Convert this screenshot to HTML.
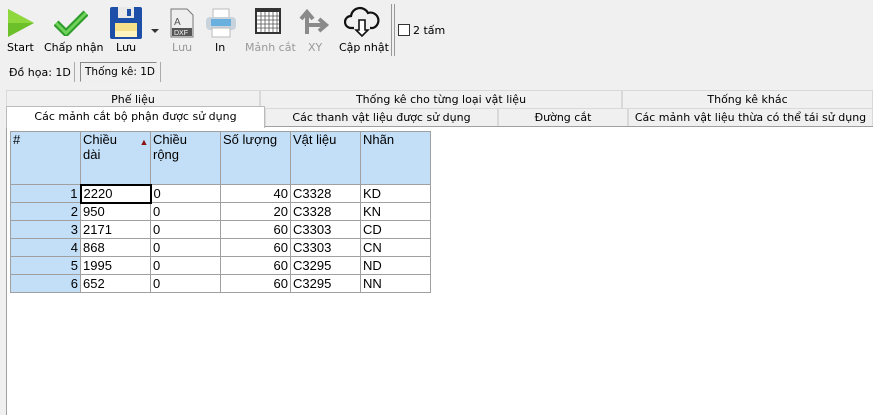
<!DOCTYPE html>
<html><head><meta charset="utf-8"><style>
*{margin:0;padding:0;box-sizing:border-box}
body{width:873px;height:415px;background:#f0f0f0;font-family:"DejaVu Sans","Liberation Sans",sans-serif;font-size:11px;color:#000;position:relative;overflow:hidden}
.a{position:absolute;white-space:nowrap}
.lbl{position:absolute;top:41px;font-size:11px;white-space:nowrap}
.tab{position:absolute;height:18px;border:1px solid #d9d9d9;border-bottom:none;background:#f0f0f0;text-align:center;line-height:18px;font-size:11px;white-space:nowrap;overflow:hidden}
table{position:absolute;left:10px;top:131px;border-collapse:collapse;font-family:"Liberation Sans",Arial,sans-serif;font-size:13px}
td{border:1px solid #a0a0a0;height:18px;padding:0 2px;line-height:16px;width:70px}
th{background:#c3dff8;border:1px solid #a0a0a0;font-weight:normal;text-align:left;vertical-align:top;height:53px;padding:0 2px;line-height:15px}
td.n{background:#c3dff8;text-align:right}
td.r{text-align:right}
</style></head><body>
<svg class="a" style="left:6px;top:8px" width="30" height="30"><polygon points="2,1 28,15 2,29" fill="#6cc02a"/><polygon points="2,1 28,15 2,15" fill="#8ed83e"/></svg>
<div class="lbl" style="left:7px">Start</div>
<svg class="a" style="left:54px;top:10px" width="34" height="26"><path d="M2 13 L12 23 L32 3" stroke="#2e9b2a" stroke-width="7" fill="none"/><path d="M2 13 L12 23 L32 3" stroke="#6fd25a" stroke-width="3" fill="none"/></svg>
<div class="lbl" style="left:44px">Chấp nhận</div>
<svg class="a" style="left:110px;top:7px" width="32" height="32"><rect x="0" y="0" width="32" height="32" rx="2" fill="#1d4fa8"/><rect x="8" y="0" width="16" height="11" fill="#e8e8e8"/><rect x="17" y="2" width="4" height="7" fill="#1d4fa8"/><rect x="5" y="16" width="22" height="14" fill="#f7e08a"/><rect x="5" y="24" width="22" height="6" fill="#fff4c0"/></svg>
<svg class="a" style="left:151px;top:29px" width="8" height="5"><polygon points="0,0 8,0 4,4" fill="#333"/></svg>
<div class="lbl" style="left:116px">Lưu</div>
<svg class="a" style="left:170px;top:8px" width="24" height="30"><path d="M1 1 H17 L23 7 V29 H1 Z" fill="#eee" stroke="#777"/><text x="4" y="17" font-size="10" fill="#555" font-family="Liberation Sans">A</text><rect x="2" y="20" width="20" height="8" fill="#555"/><text x="4" y="27" font-size="7" fill="#fff" font-family="Liberation Sans">DXF</text></svg>
<div class="lbl" style="left:172px;color:#999">Lưu</div>
<svg class="a" style="left:205px;top:8px" width="32" height="30"><rect x="8" y="1" width="16" height="10" fill="#fff" stroke="#bbb"/><rect x="1" y="9" width="30" height="13" rx="4" fill="#c9d3dc"/><rect x="6" y="11" width="20" height="7" fill="#6ab0de"/><rect x="7" y="20" width="18" height="9" fill="#fff" stroke="#bbb"/></svg>
<div class="lbl" style="left:215px">In</div>
<svg class="a" style="left:255px;top:8px" width="26" height="26"><rect x="0" y="0" width="26" height="26" fill="#333"/><rect x="2" y="4" width="22" height="20" fill="#fff"/><path d="M2 8H24M2 12H24M2 16H24M2 20H24M6 4V24M10 4V24M14 4V24M18 4V24M22 4V24" stroke="#555" stroke-width="0.8"/></svg>
<div class="lbl" style="left:245px;color:#999">Mảnh cắt</div>
<svg class="a" style="left:298px;top:8px" width="34" height="30"><path d="M9 26 V5 M3 11 L9 4 L15 11 M9 17 H26 M21 11 L28 17 L21 23" stroke="#8a8a8a" stroke-width="4" fill="none"/></svg>
<div class="lbl" style="left:308px;color:#999">XY</div>
<svg class="a" style="left:344px;top:6px" width="36" height="32"><path d="M10 22 H7 A6 6 0 0 1 7 10 A9 9 0 0 1 24 7 A7 7 0 0 1 29 22 H26" stroke="#111" stroke-width="2.2" fill="none"/><path d="M15 14 V24 H12 L18 30 L24 24 H21 V14 Z" stroke="#111" stroke-width="1.6" fill="#fff"/></svg>
<div class="lbl" style="left:339px">Cập nhật</div>
<div class="a" style="left:391px;top:4px;width:1px;height:52px;background:#999"></div>
<div class="a" style="left:394px;top:4px;width:1px;height:52px;background:#999"></div>
<div class="a" style="left:398px;top:24px;width:12px;height:12px;border:1px solid #333;background:#fff"></div>
<div class="a" style="left:413px;top:24px">2 tấm</div>
<div class="a" style="left:9px;top:66px">Đồ họa: 1D</div>
<div class="a" style="left:74px;top:62px;width:1px;height:20px;background:#aaa"></div>
<div class="a" style="left:80px;top:62px;width:77px;height:20px;border:1px solid #888;border-right-color:#eee;border-bottom-color:#eee;padding:3px 0 0 4px;font-size:10.5px">Thống kê: 1D</div>
<div class="a" style="left:160px;top:62px;width:1px;height:20px;background:#aaa"></div>
<div class="tab" style="left:6px;top:90px;width:254px">Phế liệu</div>
<div class="tab" style="left:260px;top:90px;width:362px">Thống kê cho từng loại vật liệu</div>
<div class="tab" style="left:622px;top:90px;width:251px">Thống kê khác</div>
<div class="tab" style="left:265px;top:108px;width:233px">Các thanh vật liệu được sử dụng</div>
<div class="tab" style="left:498px;top:108px;width:130px">Đường cắt</div>
<div class="tab" style="left:628px;top:108px;width:245px">Các mảnh vật liệu thừa có thể tái sử dụng</div>
<div class="a" style="left:6px;top:126px;width:867px;height:1px;background:#a0a0a0"></div>
<div class="a" style="left:6px;top:127px;width:867px;height:288px;background:#fff;border-left:1px solid #a0a0a0"></div>
<div class="tab" style="left:6px;top:106px;width:259px;height:22px;background:#fff;border-color:#bbb;line-height:19px">Các mảnh cắt bộ phận được sử dụng</div>
<table>
<tr><th>#</th><th>Chiều<br>dài<span style="position:absolute;left:129px;top:3px;color:#8b1010;font-size:9px">▲</span></th><th>Chiều<br>rộng</th><th>Số lượng</th><th>Vật liệu</th><th>Nhãn</th></tr>
<tr><td class="n">1</td><td style="border:2px solid #000">2220</td><td>0</td><td class="r">40</td><td>C3328</td><td>KD</td></tr>
<tr><td class="n">2</td><td>950</td><td>0</td><td class="r">20</td><td>C3328</td><td>KN</td></tr>
<tr><td class="n">3</td><td>2171</td><td>0</td><td class="r">60</td><td>C3303</td><td>CD</td></tr>
<tr><td class="n">4</td><td>868</td><td>0</td><td class="r">60</td><td>C3303</td><td>CN</td></tr>
<tr><td class="n">5</td><td>1995</td><td>0</td><td class="r">60</td><td>C3295</td><td>ND</td></tr>
<tr><td class="n">6</td><td>652</td><td>0</td><td class="r">60</td><td>C3295</td><td>NN</td></tr>
</table>
</body></html>
